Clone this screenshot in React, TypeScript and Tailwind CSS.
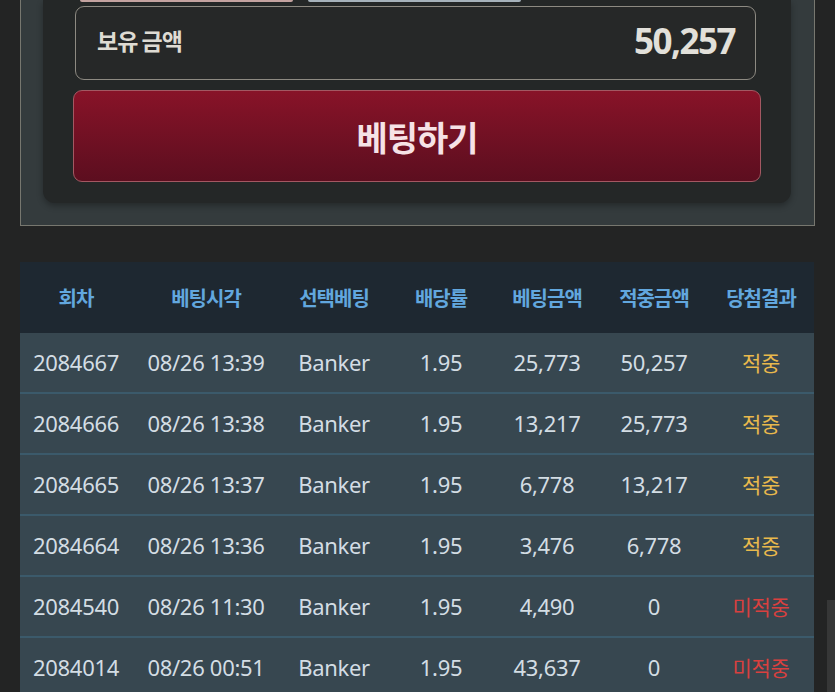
import React from "react";

const rows = [
  { id: "2084667", time: "08/26 13:39", pick: "Banker", odds: "1.95", bet: "25,773", win: "50,257", hit: true },
  { id: "2084666", time: "08/26 13:38", pick: "Banker", odds: "1.95", bet: "13,217", win: "25,773", hit: true },
  { id: "2084665", time: "08/26 13:37", pick: "Banker", odds: "1.95", bet: "6,778", win: "13,217", hit: true },
  { id: "2084664", time: "08/26 13:36", pick: "Banker", odds: "1.95", bet: "3,476", win: "6,778", hit: true },
  { id: "2084540", time: "08/26 11:30", pick: "Banker", odds: "1.95", bet: "4,490", win: "0", hit: false },
  { id: "2084014", time: "08/26 00:51", pick: "Banker", odds: "1.95", bet: "43,637", win: "0", hit: false },
];

const headers = ["회차", "베팅시각", "선택베팅", "배당률", "베팅금액", "적중금액", "당첨결과"];
const cols = "grid grid-cols-[112px_148px_108px_106px_106px_108px_106px]";

export default function App() {
  return (
    <div
      className="relative min-h-screen bg-[#232424] overflow-hidden"
      style={{ fontFamily: '"Noto Sans", "Noto Sans CJK KR", sans-serif' }}
    >
      <div className="ml-[20px] w-[795px] border-x border-b border-[#77776f] bg-[#343b3d] pl-[22px] pr-[22px] pb-[22px]">
        <div className="w-[748px] rounded-b-[12px] bg-[#242727] pb-[21px] shadow-[0_3px_6px_rgba(0,0,0,0.3)]">
          <div className="flex h-[2px] pl-[37px] gap-[15px]">
            <div className="w-[213px] h-[2px] rounded-b-[3px] bg-[#c4a3a0]" />
            <div className="w-[213px] h-[2px] rounded-b-[3px] bg-[#a6b2bb]" />
          </div>
          <div className="ml-[32px] mt-[4px] flex h-[74px] w-[681px] items-center justify-between rounded-[9px] border border-[#8d8a82] bg-[#262828] pl-[21px] pr-[20px] pb-[5px]">
            <span className="text-[23px] font-bold text-[#dedbd3] tracking-[-1px]" style={{ fontFamily: '"Noto Sans CJK KR", sans-serif' }}>
              보유 금액
            </span>
            <span className="text-[35px] font-bold text-[#e2e0da] tracking-[-1.5px] leading-none">50,257</span>
          </div>
          <div className="ml-[30px] mt-[10px] flex h-[92px] w-[688px] items-center justify-center rounded-[9px] border border-[#a35862] bg-gradient-to-b from-[#881328] to-[#5c0e1f]">
            <span className="text-[34px] font-bold text-[#f6e2e6] tracking-[-1px]" style={{ fontFamily: '"Noto Sans CJK KR", sans-serif' }}>
              베팅하기
            </span>
          </div>
        </div>
      </div>

      <div className="ml-[20px] mt-[36px] w-[794px]">
        <div className={`${cols} h-[71px] items-center bg-[#1e2831]`}>
          {headers.map((h) => (
            <div
              key={h}
              className="text-center text-[20px] font-bold text-[#62a7de] tracking-[-1px]"
              style={{ fontFamily: '"Noto Sans CJK KR", sans-serif' }}
            >
              {h}
            </div>
          ))}
        </div>
        {rows.map((r) => (
          <div
            key={r.id}
            className={`${cols} h-[61px] items-center border-b-2 border-[#3b5a6b] bg-[#374750] text-[22px] text-[#d3dde4] tracking-[-0.3px]`}
          >
            <div className="text-center">{r.id}</div>
            <div className="text-center">{r.time}</div>
            <div className="text-center">{r.pick}</div>
            <div className="text-center">{r.odds}</div>
            <div className="text-center">{r.bet}</div>
            <div className="text-center">{r.win}</div>
            <div
              className={`text-center text-[21px] ${r.hit ? "text-[#e9b94c]" : "text-[#d9403f]"}`}
              style={{ fontFamily: '"Noto Sans CJK KR", sans-serif' }}
            >
              {r.hit ? "적중" : "미적중"}
            </div>
          </div>
        ))}
      </div>

      <div className="absolute right-0 top-[600px] h-[92px] w-[8px] bg-[#363737]" />
    </div>
  );
}
